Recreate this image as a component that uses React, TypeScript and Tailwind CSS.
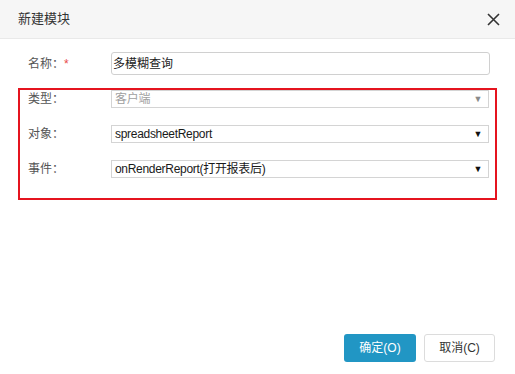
const font = "font-['Liberation_Sans','Noto_Sans_CJK_SC',sans-serif]";

function SelectBox({ value, muted }: { value: string; muted?: boolean }) {
  return (
    <div
      className={`w-[378px] h-[18px] border border-[#d4d4d4] bg-white flex items-center justify-between pl-[3px] pr-[6px] text-[12px] tracking-[-0.3px] leading-none ${
        muted ? 'text-[#a0a0a0]' : 'text-[#1a1a1a]'
      }`}
    >
      <span>{value}</span>
      <span className={`text-[9px] ${muted ? 'text-[#8a8a8a]' : 'text-[#111]'}`}>▼</span>
    </div>
  );
}

export default function App() {
  const rows = [
    { label: '类型：', value: '客户端', muted: true },
    { label: '对象：', value: 'spreadsheetReport' },
    { label: '事件：', value: 'onRenderReport(打开报表后)' },
  ];

  return (
    <div className={`w-[515px] h-[374px] bg-white flex flex-col ${font}`}>
      {/* Header */}
      <div className="h-[39px] shrink-0 bg-[#f6f6f6] border-b border-[#e9e9e9] flex items-center justify-between pl-[18px] pr-[15px]">
        <span className="text-[13px] text-[#333]">新建模块</span>
        <svg width="13" height="13" viewBox="0 0 13 13" className="text-[#333]">
          <path d="M1 1L12 12M12 1L1 12" stroke="currentColor" strokeWidth="1.6" />
        </svg>
      </div>

      {/* Body */}
      <div className="flex-1 pt-[13px]">
        <div className="flex items-center h-[23px]">
          <div className="w-[111px] pl-[28px] text-[12px] text-[#555]">
            名称：<span className="text-[#e84a4a]">*</span>
          </div>
          <div className="w-[379px] h-[23px] border border-[#d0d0d0] rounded-[3px] flex items-center pl-[1px] text-[12px] text-[#222]">
            多模糊查询
          </div>
        </div>

        <div className="mt-[13px] ml-[18px] w-[479px] border-2 border-[#e5141f] pb-[20px] flex flex-col gap-[17px]">
          {rows.map((r) => (
            <div key={r.label} className="flex items-center h-[18px]">
              <div className="w-[91px] pl-[8px] text-[12px] text-[#555]">{r.label}</div>
              <SelectBox value={r.value} muted={r.muted} />
            </div>
          ))}
        </div>
      </div>

      {/* Footer */}
      <div className="flex justify-end gap-[8px] pr-[20px] pb-[12px]">
        <button className="w-[72px] h-[28px] rounded-[3px] bg-[#2196c4] text-white text-[12px]">确定(O)</button>
        <button className="w-[71px] h-[28px] rounded-[3px] border border-[#dcdcdc] bg-white text-[#333] text-[12px]">
          取消(C)
        </button>
      </div>
    </div>
  );
}
